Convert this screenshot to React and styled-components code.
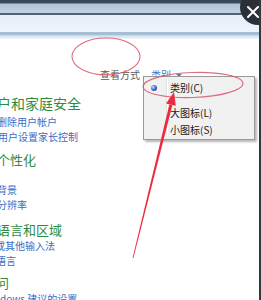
import React from 'react';
import styled, { createGlobalStyle } from 'styled-components';

const GlobalStyle = createGlobalStyle`
  html, body {
    margin: 0;
    padding: 0;
    background: #ffffff;
    overflow: hidden;
  }
  body {
    font-family: "Noto Sans CJK SC", "Noto Sans", sans-serif;
  }
`;

// Окно панели управления
const Window = styled.div`
  position: relative;
  width: 261px;
  height: 300px;
  overflow: hidden;
  background: #ffffff;
  box-sizing: border-box;
  border-right: 2px solid #34383c;
`;

const TitleBar = styled.div`
  height: 13px;
  background: linear-gradient(to bottom, #36465a 0px, #3c4c62 3px, #b2c3d8 4px, #c2d0e2 13px);
  border-bottom: 2px solid #50627a;
`;

const AddressBar = styled.div`
  height: 17px;
  background: linear-gradient(to bottom, #e6eef8, #eef4fb);
  border-bottom: 3px solid #a6bed2;
`;

const Band = styled.div`
  height: 4px;
  background: linear-gradient(to bottom, #c6d6ea, #f4f8fc);
`;

const ViewRow = styled.div`
  height: 56px;
  box-sizing: border-box;
  padding: 16px 0 0 100px;
  display: flex;
  align-items: center;
  font-size: 10px;
  line-height: 14px;
`;

const ViewLabel = styled.span`
  color: #5a5a5a;
  height: 14px;
`;

const ViewLink = styled.span`
  color: #3d7acb;
  margin-left: 11px;
  height: 14px;
`;

const Caret = styled.span`
  margin-left: 5px;
  width: 0;
  height: 0;
  border-left: 3px solid transparent;
  border-right: 3px solid transparent;
  border-top: 3px solid #6a7a8a;
`;

const List = styled.div`
  display: flex;
  flex-direction: column;
`;

const Category = styled.div`
  margin-top: ${p => p.$top}px;
  display: flex;
  flex-direction: column;
`;

const Heading = styled.div`
  height: 16px;
  line-height: 16px;
  font-size: ${p => p.$size || 13}px;
  color: #2f8c3e;
  margin-left: ${p => p.$shift || 0}px;
  white-space: nowrap;
`;

const Links = styled.div`
  padding-top: ${p => p.$top || 0}px;
  display: flex;
  flex-direction: column;
`;

const LinkLine = styled.div`
  height: 15px;
  line-height: 15px;
  font-size: 10px;
  color: #3a6cc4;
  margin-left: ${p => p.$shift || 0}px;
  white-space: nowrap;
`;

// Выпадающее меню
const Menu = styled.div`
  position: absolute;
  left: 143px;
  top: 76px;
  width: 112px;
  height: 64px;
  box-sizing: border-box;
  background: #f1f1f1;
  border: 1px solid #9a9a9a;
  box-shadow: 2px 2px 2px rgba(0, 0, 0, 0.28);
  padding-top: 2px;
  &::before {
    content: "";
    position: absolute;
    left: 22px;
    top: 2px;
    bottom: 2px;
    width: 1px;
    background: #e2e3e3;
    box-shadow: 1px 0 0 #ffffff;
  }
`;

const MenuItem = styled.div`
  position: relative;
  height: 17px;
  line-height: 17px;
  margin-top: ${p => p.$top || 0}px;
  padding-left: 26px;
  font-size: 10px;
  color: #1a1a1a;
`;

const Bullet = styled.span`
  position: absolute;
  left: 7px;
  top: 6px;
  width: 6px;
  height: 6px;
  border-radius: 50%;
  background: radial-gradient(circle at 35% 35%, #c8d8ff 0%, #3a5cc0 55%, #1a2e78 100%);
`;

// Круглая кнопка закрытия поверх угла
const CloseButton = styled.div`
  position: absolute;
  right: -17px;
  top: -11px;
  width: 36px;
  height: 36px;
  border-radius: 50%;
  background-color: #2a3036;
  z-index: 6;
  display: flex;
  align-items: center;
  justify-content: center;
  svg {
    display: block;
    margin: 9px 10px 0 0;
  }
`;

const Overlay = styled.svg`
  position: absolute;
  left: 0;
  top: 0;
  z-index: 5;
  pointer-events: none;
`;

const groups = [
  {
    top: 0, title: '户和家庭安全', size: 14, shift: -3, linksTop: 3,
    links: [{ t: '删除用户帐户', s: -3 }, { t: '用户设置家长控制', s: -2 }],
  },
  {
    top: 8, title: '个性化', shift: -3, linksTop: 14,
    links: [{ t: '背景', s: -3 }, { t: '分辨率', s: -3 }],
  },
  {
    top: 10, title: '语言和区域', shift: -3, linksTop: 0,
    links: [{ t: '或其他输入法', s: -5 }, { t: '语言', s: -4 }],
  },
  {
    top: 7, title: '问', shift: -4, linksTop: 0,
    links: [{ t: 'dows 建议的设置', s: 0 }],
  },
];

const App = () => {
  return (
    <Window>
      <GlobalStyle />
      <TitleBar />
      <AddressBar />
      <Band />
      <ViewRow>
        <ViewLabel>查看方式</ViewLabel>
        <ViewLink>类别</ViewLink>
        <Caret />
      </ViewRow>
      <List>
        {groups.map((g, i) => (
          <Category key={i} $top={g.top}>
            <Heading $size={g.size} $shift={g.shift}>{g.title}</Heading>
            <Links $top={g.linksTop}>
              {g.links.map((l, j) => (
                <LinkLine key={j} $shift={l.s}>{l.t}</LinkLine>
              ))}
            </Links>
          </Category>
        ))}
      </List>

      {/* Меню */}
      <Menu>
        <MenuItem><Bullet />类别(C)</MenuItem>
        <MenuItem $top={8}>大图标(L)</MenuItem>
        <MenuItem>小图标(S)</MenuItem>
      </Menu>

      {/* Пометки */}
      <Overlay width="261" height="300" viewBox="0 0 261 300">
        <ellipse cx="106" cy="56.5" rx="34" ry="18.5" fill="none" stroke="#d9546a" strokeWidth="1.1" opacity="0.85" />
        <ellipse cx="193" cy="85" rx="50" ry="12.5" fill="none" stroke="#d9546a" strokeWidth="1.1" opacity="0.85" transform="rotate(-2 193 85)" />
        <polygon points="172.4,105 169.4,104.2 132.6,257.9 133.4,258.1" fill="#ee2a3e" />
        <polygon points="174,92 175.8,105.8 166,103.4" fill="#ee2a3e" />
      </Overlay>

      <CloseButton>
        <svg width="12" height="12" viewBox="0 0 12 12">
          <path d="M1 1 L11 11 M11 1 L1 11" stroke="#ffffff" strokeWidth="2" strokeLinecap="round" />
        </svg>
      </CloseButton>
    </Window>
  );
};

export default App;
